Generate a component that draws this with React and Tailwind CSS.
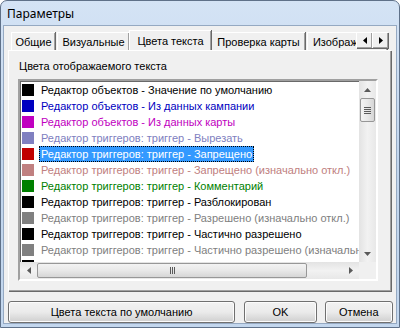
const rows = [
  { color: '#000000', text: 'Редактор объектов - Значение по умолчанию' },
  { color: '#0000c0', text: 'Редактор объектов - Из данных кампании' },
  { color: '#c000c0', text: 'Редактор объектов - Из данных карты' },
  { color: '#8080c0', text: 'Редактор триггеров: триггер - Вырезать' },
  { color: '#c00000', text: 'Редактор триггеров: триггер - Запрещено', selected: true },
  { color: '#c08080', text: 'Редактор триггеров: триггер - Запрещено (изначально откл.)' },
  { color: '#008000', text: 'Редактор триггеров: триггер - Комментарий' },
  { color: '#000000', text: 'Редактор триггеров: триггер - Разблокирован' },
  { color: '#808080', text: 'Редактор триггеров: триггер - Разрешено (изначально откл.)' },
  { color: '#000000', text: 'Редактор триггеров: триггер - Частично разрешено' },
  { color: '#808080', text: 'Редактор триггеров: триггер - Частично разрешено (изначально откл.)' },
  { color: '#000000', text: 'Редактор триггеров: триггер - Активирован' },
]

const tabs = [
  { label: 'Общие', w: 'w-[44px]' },
  { label: 'Визуальные', w: 'w-[72px]' },
  { label: 'Цвета текста', w: 'w-[82px]', active: true },
  { label: 'Проверка карты', w: 'w-[94px]' },
  { label: 'Изображения', w: 'w-[80px]' },
]

function Arrow({ dir, className = '' }) {
  const pts = {
    up: '0,4 3.5,0 7,4',
    down: '0,0 3.5,4 7,0',
    left: '4,0 0,3.5 4,7',
    right: '0,0 4,3.5 0,7',
  }[dir]
  const vertical = dir === 'up' || dir === 'down'
  return (
    <svg width={vertical ? 7 : 4} height={vertical ? 4 : 7} className={className}>
      <polygon points={pts} fill="currentColor" />
    </svg>
  )
}

function Tab({ tab }) {
  if (tab.active) {
    return (
      <div
        className={`relative z-10 -mx-[2px] -mb-[1px] flex h-[21px] ${tab.w} shrink-0 items-start justify-center whitespace-nowrap border-l border-t border-white bg-[#f0f0f0] pt-[3px] shadow-[inset_-1px_0_0_#a0a0a0,1px_0_0_#696969]`}
      >
        {tab.label}
      </div>
    )
  }
  return (
    <div
      className={`flex h-[18px] ${tab.w} shrink-0 items-start justify-center overflow-hidden whitespace-nowrap border-l border-t border-white bg-[#f0f0f0] pt-[2px] shadow-[inset_-1px_0_0_#a0a0a0,1px_0_0_#696969]`}
    >
      {tab.label}
    </div>
  )
}

function ArrowButton({ dir }) {
  return (
    <div className="flex h-[16px] w-[16px] items-center justify-center border-l border-t border-white bg-[#f0f0f0] text-black shadow-[inset_-1px_-1px_0_#a0a0a0,1px_1px_0_#696969]">
      <Arrow dir={dir} />
    </div>
  )
}

function Button({ children, className = '' }) {
  return (
    <div
      className={`flex h-[22px] items-center justify-center rounded-[3px] border border-[#707070] bg-gradient-to-b from-[#f2f2f2] via-[#ebebeb] to-[#cfcfcf] shadow-[inset_0_0_0_1px_#fcfcfc] ${className}`}
    >
      {children}
    </div>
  )
}

export default function App() {
  return (
    <div
      className="h-[328px] w-[400px] overflow-hidden bg-white text-[11px] leading-[14px] text-black"
      style={{ fontFamily: '"Liberation Sans", Arial, sans-serif' }}
    >
      <div className="flex h-full flex-col rounded-t-[7px] border border-[#5f7189] bg-gradient-to-b from-[#d4e3f5] via-[#c2d6ee] to-[#c3d7ee]">
        <div
          className="flex h-[24px] shrink-0 items-center pl-[6px] pt-[1px] text-[12px]"
          style={{ fontFamily: '"Noto Sans", "Open Sans", sans-serif' }}
        >
          Параметры
        </div>

        <div className="mx-[2px] mb-[3px] flex flex-1 flex-col border border-[#95a9c2] bg-[#f0f0f0] pt-[4px]">
          {/* tab strip */}
          <div className="relative ml-[7px] mr-[5px] flex h-[20px] items-end gap-[2px] overflow-hidden pt-[1px]">
            {tabs.map((tab) => (
              <Tab key={tab.label} tab={tab} />
            ))}
            <div className="absolute right-[3px] top-[2px] flex">
              <ArrowButton dir="left" />
              <ArrowButton dir="right" />
            </div>
          </div>

          {/* tab page */}
          <div className="ml-[4px] mr-[5px] h-[241px] border-l border-t border-white pl-[9px] pt-[8px] shadow-[inset_-1px_-1px_0_#a0a0a0,1px_1px_0_#696969]">
            <div className="pl-[1px]">Цвета отображаемого текста</div>

            <div className="mt-[6px] flex h-[202px] w-[360px] flex-col border-2 border-[#a0a0a0] border-b-white border-r-white bg-white shadow-[inset_1px_1px_0_#696969]">
              <div className="flex min-h-0 flex-1">
                <div className="min-w-0 flex-1 overflow-hidden pl-[1px] pt-[1px]">
                  {rows.map((row) => (
                    <div key={row.text} className="flex h-[16px] items-center whitespace-nowrap">
                      <span className="ml-[1px] h-[12px] w-[12px] shrink-0" style={{ backgroundColor: row.color }} />
                      <span
                        className={`ml-[5px] h-[16px] px-[2px] leading-[16px] ${
                          row.selected ? 'bg-[#3399ff] text-white outline-1 outline-dotted -outline-offset-1 outline-[#000]' : ''
                        }`}
                        style={row.selected ? undefined : { color: row.color }}
                      >
                        {row.text}
                      </span>
                    </div>
                  ))}
                </div>

                {/* vertical scrollbar */}
                <div className="flex w-[17px] shrink-0 flex-col items-center bg-gradient-to-r from-[#e3e3e3] via-[#f2f2f2] to-[#e8e8e8]">
                  <div className="flex h-[17px] items-center justify-center text-[#5a5a5a]">
                    <Arrow dir="up" />
                  </div>
                  <div className="flex h-[24px] w-[15px] flex-col items-center justify-center gap-[1px] rounded-[2px] border border-[#979797] bg-gradient-to-r from-[#f3f3f3] via-[#e8e8e8] to-[#d6d6d6]">
                    <span className="h-px w-[7px] bg-[#5a5a5a]" />
                    <span className="h-px w-[7px] bg-[#5a5a5a]" />
                    <span className="h-px w-[7px] bg-[#5a5a5a]" />
                    <span className="h-px w-[7px] bg-[#5a5a5a]" />
                  </div>
                  <div className="flex-1" />
                  <div className="flex h-[17px] items-center justify-center text-[#5a5a5a]">
                    <Arrow dir="down" />
                  </div>
                </div>
              </div>

              {/* horizontal scrollbar */}
              <div className="flex h-[17px] shrink-0">
                <div className="flex flex-1 items-center bg-gradient-to-b from-[#e3e3e3] via-[#f2f2f2] to-[#e8e8e8]">
                  <div className="flex w-[17px] justify-center text-[#5a5a5a]">
                    <Arrow dir="left" />
                  </div>
                  <div className="flex h-[15px] w-[270px] items-center justify-center gap-[1px] rounded-[2px] border border-[#979797] bg-gradient-to-b from-[#f3f3f3] via-[#e8e8e8] to-[#d6d6d6]">
                    <span className="h-[7px] w-px bg-[#5a5a5a]" />
                    <span className="h-[7px] w-px bg-[#5a5a5a]" />
                    <span className="h-[7px] w-px bg-[#5a5a5a]" />
                  </div>
                  <div className="flex-1" />
                  <div className="flex w-[17px] justify-center text-[#5a5a5a]">
                    <Arrow dir="right" />
                  </div>
                </div>
                <div className="w-[17px] bg-[#f0f0f0]" />
              </div>
            </div>
          </div>

          {/* buttons */}
          <div className="ml-[4px] mr-[3px] mt-[10px] flex gap-[8px]">
            <Button className="w-[229px]">Цвета текста по умолчанию</Button>
            <Button className="ml-[1px] w-[73px]">OK</Button>
            <Button className="w-[69px]">Отмена</Button>
          </div>
        </div>
      </div>
    </div>
  )
}
